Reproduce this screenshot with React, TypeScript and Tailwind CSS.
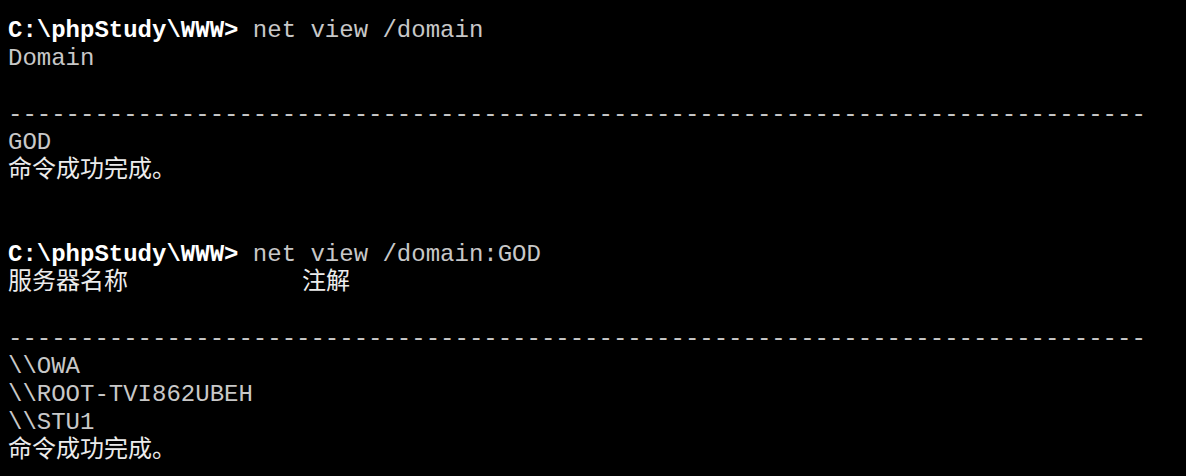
import React from "react";

const mono = "font-['Liberation_Mono','Courier_New','Noto_Sans_CJK_SC',monospace]";
const cjk = "font-['Noto_Sans_CJK_SC','Microsoft_YaHei',sans-serif] text-[24px] text-[#ececec]";

function Line({ children, cn = "leading-[28px]" }: { children?: React.ReactNode; cn?: string }) {
  return <div className={`h-[28px] whitespace-pre ${cn}`}>{children}</div>;
}

function Prompt({ cmd }: { cmd: string }) {
  return (
    <Line>
      <span className="font-bold text-white">C:\phpStudy\WWW&gt;</span> {cmd}
    </Line>
  );
}

function CjkLine({ children }: { children: React.ReactNode }) {
  return (
    <Line cn="leading-[20px]">
      <span className={`${cjk} inline-block align-top leading-[20px]`}>{children}</span>
    </Line>
  );
}

export default function App() {
  const dashes = "-".repeat(79);
  return (
    <div className={`w-[1186px] h-[476px] bg-black overflow-hidden pt-[17px] pl-[8px] text-[24px] text-[#c8c8c8] ${mono}`}>
      <Prompt cmd="net view /domain" />
      <Line>Domain</Line>
      <Line />
      <Line>{dashes}</Line>
      <Line>GOD</Line>
      <CjkLine>命令成功完成。</CjkLine>
      <Line />
      <Line />
      <Prompt cmd="net view /domain:GOD" />
      <CjkLine>
        服务器名称<span className="ml-[174px]">注解</span>
      </CjkLine>
      <Line />
      <Line>{dashes}</Line>
      <Line>\\OWA</Line>
      <Line>\\ROOT-TVI862UBEH</Line>
      <Line>\\STU1</Line>
      <CjkLine>命令成功完成。</CjkLine>
    </div>
  );
}
